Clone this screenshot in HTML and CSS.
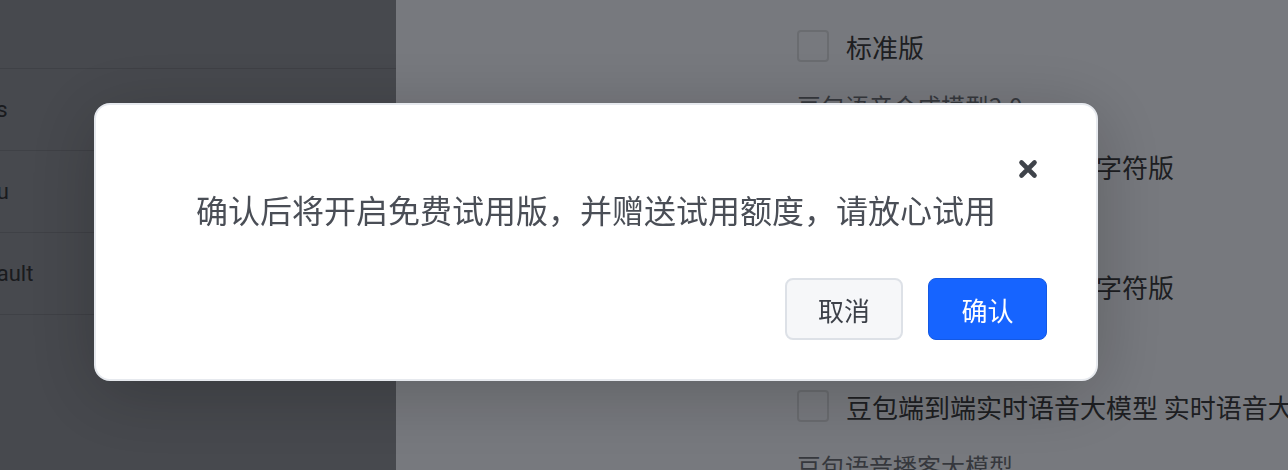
FILE: index.html
```html
<!DOCTYPE html>
<html>
<head>
    <title>开通试用</title>
    <link rel="stylesheet" href="styles.css">
</head>
<body>
<div class="page">
    <aside class="sidebar">
        <div class="sidebar-head"></div>
        <ul class="voice-list">
            <li>Plus</li>
            <li>Mou</li>
            <li>default</li>
        </ul>
    </aside>

    <main class="content">
        <div class="option"><span class="checkbox"></span><span>标准版</span></div>
        <div class="option-note">豆包语音合成模型2.0</div>
        <div class="option"><span class="checkbox"></span><span>豆包语音合成模型2.0 字符版</span></div>
        <div class="option-note">豆包语音合成模型2.0</div>
        <div class="option"><span class="checkbox"></span><span>豆包语音合成模型1.0 字符版</span></div>
        <div class="option-note">豆包端到端实时语音大模型</div>
        <div class="option"><span class="checkbox"></span><span>豆包端到端实时语音大模型 实时语音大模型</span></div>
        <div class="option-note">豆包语音播客大模型</div>
    </main>
</div>

<!-- confirm dialog -->
<div class="mask">
    <div class="dialog">
        <button class="dialog-close" aria-label="关闭">
            <svg width="20" height="20" viewBox="0 0 20 20">
                <path d="M3.5 3.5 L16.5 16.5 M16.5 3.5 L3.5 16.5" stroke="#3f434a" stroke-width="4.6" stroke-linecap="round" fill="none"/>
            </svg>
        </button>
        <p class="dialog-msg">确认后将开启免费试用版，并赠送试用额度，请放心试用</p>
        <div class="dialog-actions">
            <button class="btn btn-cancel">取消</button>
            <button class="btn btn-ok">确认</button>
        </div>
    </div>
</div>
</body>
</html>
```

FILE: styles.css
```css
body {
    margin: 0;
    height: 470px;
    overflow: hidden;
    font-family: 'Noto Sans CJK SC', sans-serif;
}

.page {
    display: flex;
    height: 470px;
}

.sidebar {
    width: 396px;
    flex-shrink: 0;
    background-color: #8e929c;
    overflow: hidden;
}

.sidebar-head {
    height: 68px;
    border-bottom: 1px solid #7e828c;
}

/* list is scrolled sideways, only the word endings show */
.voice-list {
    list-style: none;
    margin: 0 0 0 -35px;
    padding: 0;
    font-family: 'Roboto', sans-serif;
    font-size: 22px;
    color: #34363c;
}

.voice-list li {
    height: 81px;
    line-height: 81px;
    border-bottom: 1px solid #7e828c;
    white-space: nowrap;
}

.content {
    flex: 1;
    background-color: #eff3fd;
    padding: 16px 0 0 401px;
    white-space: nowrap;
    overflow: hidden;
}

.option {
    display: flex;
    align-items: center;
    height: 60px;
    font-size: 26px;
    color: #3c3e44;
}

.checkbox {
    width: 32px;
    height: 32px;
    box-sizing: border-box;
    border: 2px solid #d4d8e0;
    border-radius: 4px;
    background-color: #eff3fd;
    margin-right: 17px;
    flex-shrink: 0;
}

.option-note {
    height: 60px;
    line-height: 60px;
    font-size: 24px;
    color: #6c717b;
}

.mask {
    position: fixed;
    top: 0;
    left: 0;
    right: 0;
    bottom: 0;
    background-color: rgba(0, 0, 0, 0.5);
    padding: 103px 0 0 94px;
}

.dialog {
    position: relative;
    width: 1004px;
    box-sizing: border-box;
    background-color: #fff;
    border: 2px solid #e6e9ee;
    border-radius: 16px;
    padding: 82px 49px 39px;
    box-shadow: 0 12px 70px rgba(0, 0, 0, 0.22);
}

.dialog-close {
    position: absolute;
    top: 54px;
    right: 58px;
    width: 20px;
    height: 20px;
    padding: 0;
    border: none;
    background: none;
    cursor: pointer;
}

.dialog-close svg {
    display: block;
}

.dialog-msg {
    margin: 0;
    font-size: 32px;
    line-height: 44px;
    text-align: center;
    color: #4a4e56;
}

.dialog-actions {
    display: flex;
    justify-content: flex-end;
    gap: 25px;
    margin-top: 47px;
}

.btn {
    height: 62px;
    box-sizing: border-box;
    border-radius: 8px;
    font-family: 'Noto Sans CJK SC', sans-serif;
    font-size: 26px;
    cursor: pointer;
}

.btn-cancel {
    width: 118px;
    background-color: #f6f7f9;
    border: 2px solid #dde1e7;
    color: #3c4048;
}

.btn-ok {
    width: 119px;
    background-color: #1664ff;
    border: 1px solid #1459e4;
    color: #fff;
}
```
